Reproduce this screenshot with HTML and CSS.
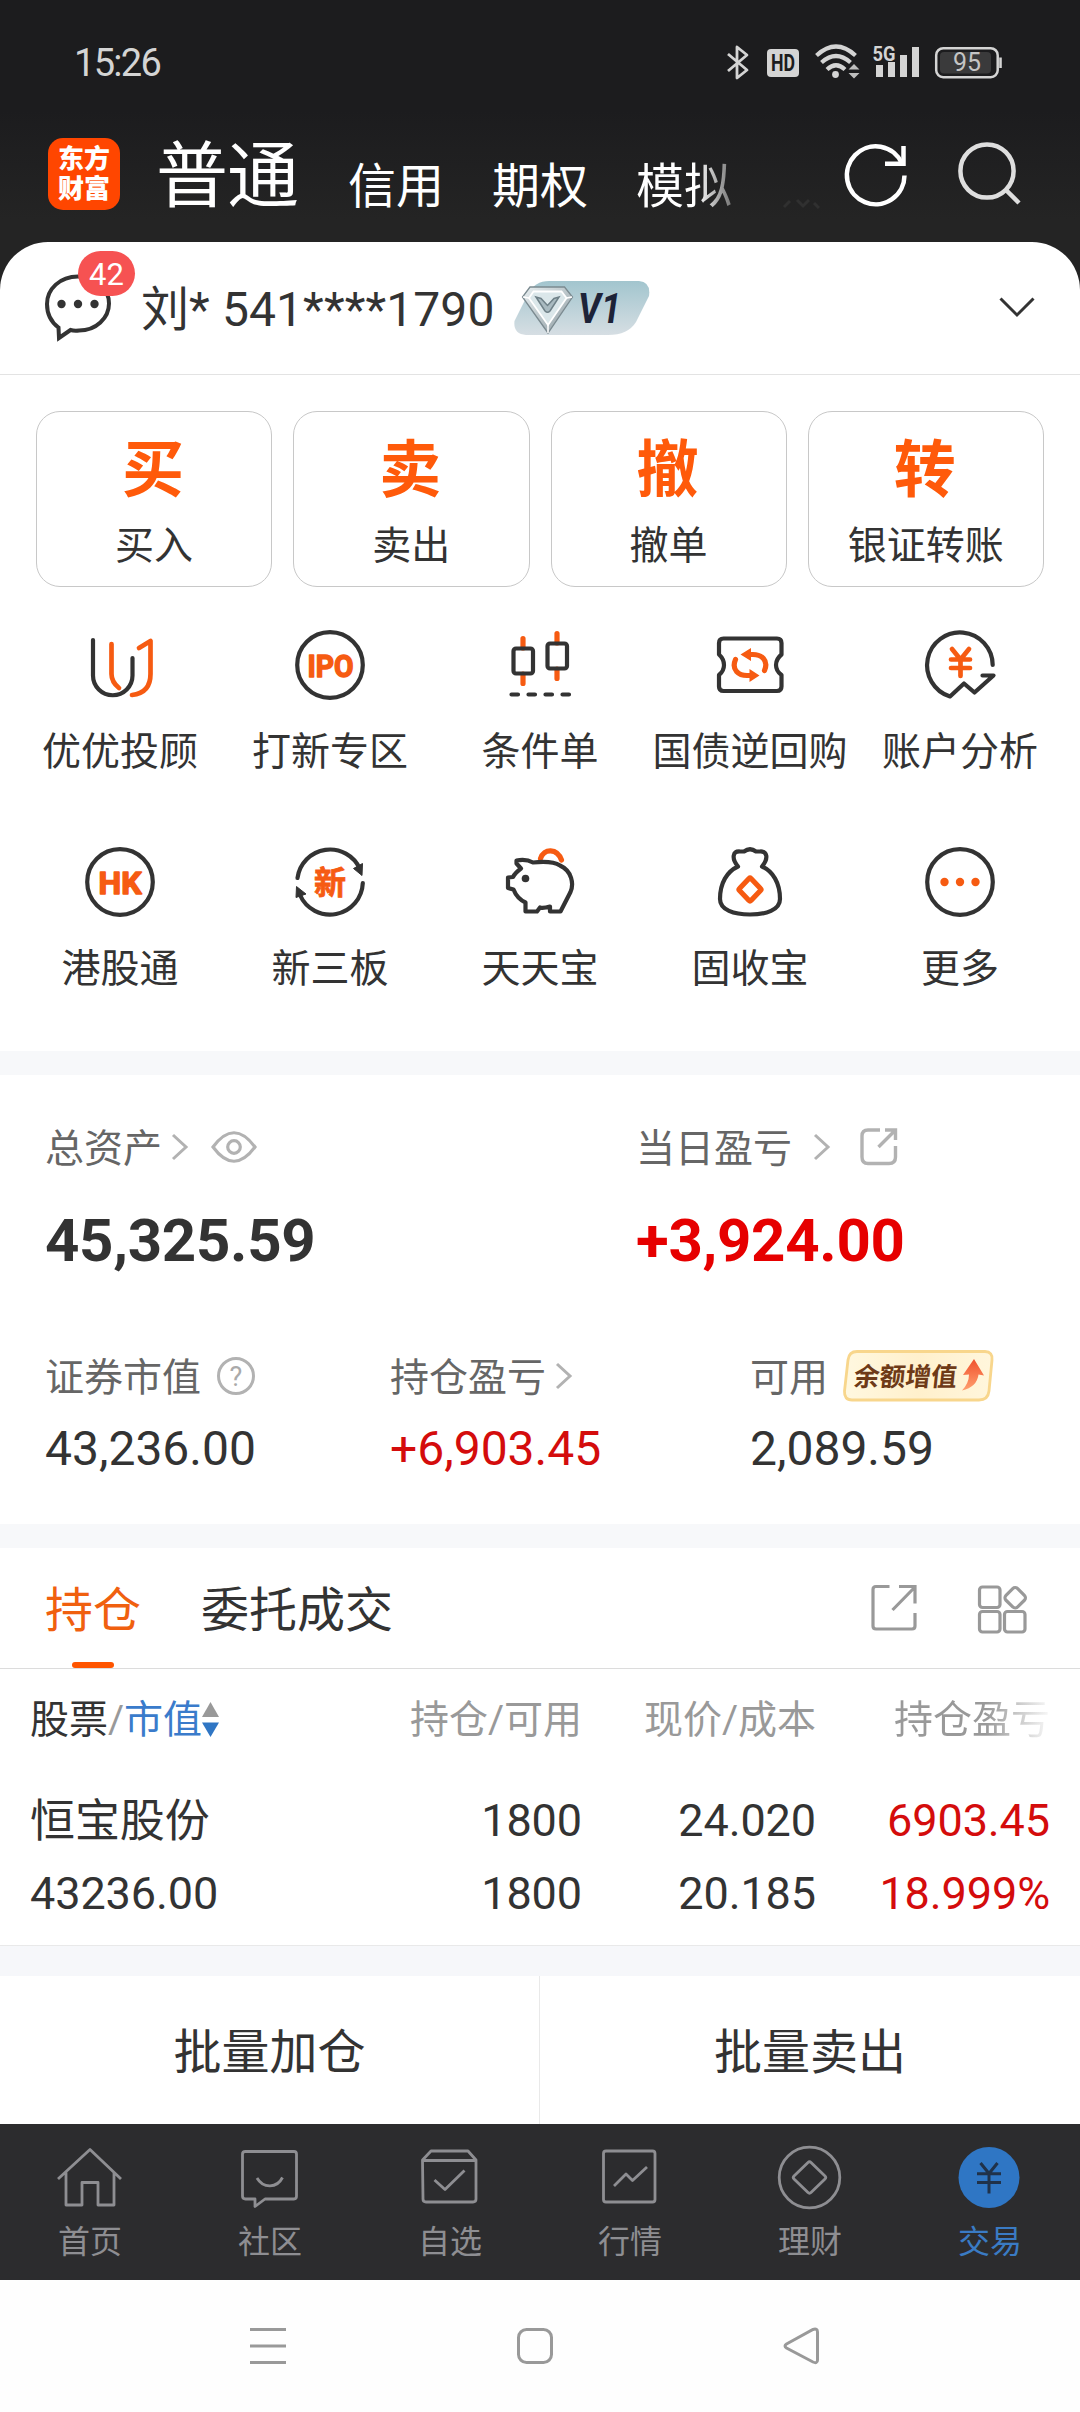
FILE: index.html
```html
<!DOCTYPE html>
<html lang="zh-CN">
<head>
<meta charset="utf-8">
<title>交易</title>
<link rel="stylesheet" href="styles.css">
</head>
<body>
<div class="screen">
  <header class="top">
    <div class="status">
      <span class="clock">15:26</span>
      <svg class="status-icons" width="280" height="40" viewBox="725 42 280 40" fill="none" stroke="#d4d4d4">
        <path d="M728 54L747 70L737 78V47L747 55L728 71" stroke-width="2.8" stroke-linejoin="round"/>
        <rect x="767" y="49" width="32" height="28" rx="4" fill="#d4d4d4" stroke="none"/>
        <text x="771" y="71" class="hd" textLength="24" lengthAdjust="spacingAndGlyphs">HD</text>
        <g stroke-width="4.2">
          <path d="M816.5 55.5Q836 37.500 855.500 55.500"/>
          <path d="M821.5 62.500Q836 49.500 850.500 62.500"/>
          <path d="M827 69.500Q836 61 845 69.500"/>
        </g>
        <circle cx="835.500" cy="74.500" r="3.400" fill="#d4d4d4" stroke="none"/>
        <path d="M848.500 69.500L854 64L859.500 69.500ZM848.500 73L854 78.500L859.500 73Z" fill="#bdbdbd" stroke="none"/>
        <path d="M876 65h7v12h-7zM888 62h7v15h-7zM900 55h7v22h-7zM912 47h7v30h-7z" fill="#d4d4d4" stroke="none"/>
        <text x="872.500" y="61" class="fiveg" textLength="23" lengthAdjust="spacingAndGlyphs">5G</text>
        <rect x="936.200" y="48.200" width="61.500" height="29" rx="7" stroke-width="2.500"/>
        <rect x="940" y="52" width="51" height="21.500" rx="4" fill="#3a3a3b" stroke="none"/>
        <path d="M1000.500 57.500V68" stroke-width="2.600"/>
        <text x="953" y="71" class="bat" textLength="28" lengthAdjust="spacingAndGlyphs">95</text>
      </svg>
    </div>
    <nav class="modes">
      <div class="logo"><span>东方</span><span>财富</span></div>
      <div class="mode-list">
        <span class="mode mode-on">普通</span>
        <span class="mode">信用</span>
        <span class="mode">期权</span>
        <span class="mode mode-fade">模拟</span>
        <svg class="more-mode" width="40" height="12" viewBox="780 198 40 12" fill="none" stroke="#303030" stroke-width="3"><path d="M784 207l6-6M797 200l6 6l6-6M814 203l5 5"/></svg>
      </div>
      <svg class="tool" width="72" height="72" viewBox="840 139 72 72" fill="none" stroke="#fff" stroke-width="4.500">
        <path d="M904.500 175.500A28.800 29 0 1 1 902 163.500"/>
        <path d="M885 163.700H903.500V146" stroke-linejoin="miter"/>
      </svg>
      <svg class="tool" width="72" height="72" viewBox="952 139 72 72" fill="none" stroke="#dedede" stroke-width="4.500">
        <circle cx="987" cy="171" r="26.600"/><path d="M1006 190L1019 203"/>
      </svg>
    </nav>
  </header>

  <main class="sheet">
    <section class="account">
      <div class="msg">
        <svg width="72" height="72" viewBox="43 272 72 72"><path d="M58.500 327.500C51 322 47 313 47 304C47 289 60 276.500 78 276.500C96 276.500 109 289 109 303.500C109 318 96 330.500 79 330.500Q74 331 70.500 330L59 338Z" fill="none" stroke="#333" stroke-width="4"/><g fill="#333"><circle cx="61.500" cy="304" r="4.200"/><circle cx="78" cy="304" r="4.200"/><circle cx="94.500" cy="304" r="4.200"/></g></svg>
        <span class="badge">42</span>
      </div>
      <span class="acct-name">刘* 541****1790</span>
      <svg class="vip" width="136" height="56" viewBox="514 280 136 56">
        <defs>
          <linearGradient id="vg" x1="0" y1="0" x2="0" y2="1"><stop offset="0" stop-color="#a2c5ce"/><stop offset="1" stop-color="#d6dee3"/></linearGradient>
          <linearGradient id="dg" x1="0" y1="0" x2="1" y2="1"><stop offset="0" stop-color="#e9f0f2"/><stop offset="1" stop-color="#8d9ba1"/></linearGradient>
        </defs>
        <path d="M549 281H639Q651 282 649 296L636 322Q628 335 608 335H526Q513 334 514.500 321L528 294Q535 281 549 281Z" fill="url(#vg)"/>
        <path d="M530 287H564.500L572.500 297L548 333L522.500 297Z" fill="url(#dg)" stroke="#7b8a90" stroke-width="1.300"/>
        <path d="M533.500 291.500H561.500L566.500 298L548 325L529 298Z" fill="#dbe7ea" stroke="#fff" stroke-width="1.800"/>
        <path d="M536 297L545 311Q547.500 313.500 550 311L559 297L554 298.500L547.500 305.500L541 298.500Z" fill="#a9bac0" stroke="#6f8188" stroke-width="1.500"/>
        <path d="M548 325V333M523 297L529 298M572 297L566.500 298" stroke="#fff" stroke-width="1.500"/>
        <text x="578" y="323" class="v1" textLength="43" lengthAdjust="spacingAndGlyphs">V1</text>
      </svg>
      <svg class="down" width="40" height="24" viewBox="997 295 40 24"><path d="M1000.500 298.500L1017 315L1033.500 298.500" fill="none" stroke="#333" stroke-width="3"/></svg>
    </section>

    <section class="actions">
      <div class="cards">
        <div class="card"><b>买</b><span>买入</span></div>
        <div class="card"><b>卖</b><span>卖出</span></div>
        <div class="card"><b>撤</b><span>撤单</span></div>
        <div class="card"><b>转</b><span>银证转账</span></div>
      </div>
      <div class="quick">
        <div class="q">
          <svg viewBox="78 623 84 84"><path class="dk" d="M93 640V675.500a19.500 19.500 0 0 0 39.500 0V658"/><path class="or" d="M111.500 644V674Q111.500 682 119 688M139 648L150.500 641V674Q150.500 693 132 695"/></svg>
          <span>优优投顾</span>
        </div>
        <div class="q">
          <svg viewBox="288 623 84 84"><circle class="dk" cx="330" cy="665" r="32.800"/><text class="ic" x="307.500" y="676.500" textLength="46" lengthAdjust="spacingAndGlyphs">IPO</text></svg>
          <span>打新专区</span>
        </div>
        <div class="q">
          <svg viewBox="498 623 84 84"><path class="or w5" d="M523 638.500V648M523 674V683.500M557 633.500V643M557 669V678.500"/><rect class="dk" x="513.500" y="648.500" width="19.500" height="25" rx="2.500"/><rect class="dk" x="547.500" y="643.500" width="19.500" height="25" rx="2.500"/><path class="dk" d="M511.500 694.500h6.500M528.500 694.500h6.500M545.500 694.500h6.500M562.500 694.500h6.500"/></svg>
          <span>条件单</span>
        </div>
        <div class="q">
          <svg viewBox="708 623 84 84"><path class="dk" d="M723.500 638.500H777Q781.500 638.500 781.500 643V654.500Q776 659 776 665Q776 671 781.500 675V686.500Q781.500 691 777 691H723.500Q719 691 719 686.500V675Q724 671 724 665Q724 659 719 654.500V643Q719 638.500 723.500 638.500Z"/><path class="or w5" d="M735.500 659.500C731 670 739 675.500 747 675.500H751M764.500 670.500C769 660 761 654.500 753 654.500H749"/><path d="M740.500 654.500L751 648V661ZM759.500 675.500L749.500 669V682Z" fill="#f65b12"/></svg>
          <span>国债逆回购</span>
        </div>
        <div class="q">
          <svg viewBox="918 623 84 84"><path class="dk" d="M992.700 665A32.800 32.800 0 1 0 950 696.500L964 683.500L974.500 692.500L993.500 675.500H982.500"/><path class="or" d="M952 649L960.500 659.500L969 649M951 659.500H970M951 668H970M960.500 660V676"/></svg>
          <span>账户分析</span>
        </div>
        <div class="q">
          <svg viewBox="78 840 84 84"><circle class="dk" cx="120" cy="882" r="32.800"/><text class="ic" x="98.500" y="893.500" textLength="43" lengthAdjust="spacingAndGlyphs">HK</text></svg>
          <span>港股通</span>
        </div>
        <div class="q">
          <svg viewBox="288 840 84 84"><path class="dk" d="M297.500 878A32.800 32.800 0 0 1 360 869M362.800 883A32.800 32.800 0 0 1 300 895"/><path d="M353.500 868.500L362.500 863.500L362 875.500ZM296.500 886.500L306 894L296 897.500Z" fill="#333" stroke="#333"/><text class="xin" x="314" y="893.500">新</text></svg>
          <span>新三板</span>
        </div>
        <div class="q">
          <svg viewBox="498 840 84 84"><path class="or w5" d="M540.500 858.500C544 848 557 848 561.500 860"/><path class="dk" d="M508 877.500L513 877Q515 873 521 868.500L516.500 863.500V860.500Q526 858.500 533 862.500C543 861.500 553 861 560 865.500C572 871 574 884 570.500 892L560.500 911.500H550V906.500Q543 908.500 540 907.500L537 911.500H525.500V902.500Q517 898.500 513.500 889.500L508 888Z"/><circle cx="525.500" cy="878.500" r="3.800" fill="#333"/></svg>
          <span>天天宝</span>
        </div>
        <div class="q">
          <svg viewBox="708 840 84 84"><path class="dk" d="M738 866.500C727 871.500 720 883 720 899C720 910 734 914.500 750 914.500C766 914.500 780 910 780 899C780 883 773 871.500 762 866.500C769 858 767 851 760 851.500H756Q750 847 744 851.500H740C733 851 731 858 738 866.500"/><path class="or w5" d="M749 878.500Q750 877.500 751 878.500L760.500 888.500Q761.500 889.500 760.500 890.500L751 900.500Q750 901.500 749 900.500L739.500 890.500Q738.500 889.500 739.500 888.500Z"/></svg>
          <span>固收宝</span>
        </div>
        <div class="q">
          <svg viewBox="918 840 84 84"><circle class="dk" cx="960" cy="882" r="32.800"/><g fill="#f65b12"><circle cx="944.500" cy="882" r="4.200"/><circle cx="960" cy="882" r="4.200"/><circle cx="975.500" cy="882" r="4.200"/></g></svg>
          <span>更多</span>
        </div>
      </div>
    </section>

    <section class="assets">
      <div class="main-row">
        <div class="stat">
          <div class="lab"><span>总资产</span>
            <svg class="arr" width="18" height="28" viewBox="0 0 18 28"><path d="M2 2L15 14L2 26"/></svg>
            <svg class="eye" width="48" height="36" viewBox="210 1129 48 36"><path d="M213 1147Q234 1118.500 255 1147Q234 1175.500 213 1147Z"/><circle cx="234" cy="1147" r="6.300"/></svg>
          </div>
          <div class="big">45,325.59</div>
        </div>
        <div class="stat">
          <div class="lab"><span>当日盈亏</span>
            <svg class="arr far" width="18" height="28" viewBox="0 0 18 28"><path d="M2 2L15 14L2 26"/></svg>
            <svg class="share" width="40" height="40" viewBox="859 1127 40 40"><path d="M880 1130H868Q862 1130 862 1136V1157Q862 1163.500 868 1163.500H889Q895.500 1163.500 895.500 1157V1146M885 1130H895.500V1140M895 1130.500L878.500 1147"/></svg>
          </div>
          <div class="big red">+3,924.00</div>
        </div>
      </div>
      <div class="sub-row">
        <div class="stat">
          <div class="lab"><span>证券市值</span>
            <svg class="help" width="40" height="40" viewBox="0 0 40 40"><circle cx="20" cy="20" r="17.500"/><text x="20" y="30" text-anchor="middle">?</text></svg>
          </div>
          <div class="mid">43,236.00</div>
        </div>
        <div class="stat">
          <div class="lab"><span>持仓盈亏</span>
            <svg class="arr near" width="18" height="28" viewBox="0 0 18 28"><path d="M2 2L15 14L2 26"/></svg>
          </div>
          <div class="mid red2">+6,903.45</div>
        </div>
        <div class="stat">
          <div class="lab"><span>可用</span>
            <svg class="promo" width="152" height="54" viewBox="842 1349 152 54">
              <defs>
                <linearGradient id="pg" x1="0" y1="0" x2="1" y2="0"><stop offset="0" stop-color="#fff8e0"/><stop offset=".5" stop-color="#fff0cc"/><stop offset="1" stop-color="#fff6dc"/></linearGradient>
                <linearGradient id="ag" x1="0" y1="0" x2="0" y2="1"><stop offset="0" stop-color="#f0512c"/><stop offset="1" stop-color="#ffa070"/></linearGradient>
              </defs>
              <path d="M857 1351.500H985Q993 1352 992 1360L989 1391Q988 1400 979 1400H852Q844 1400 844.500 1391L848 1360Q849 1351.500 857 1351.500Z" fill="url(#pg)" stroke="#f8d68c" stroke-width="2.800"/>
              <text class="promo-t" transform="translate(853 1386) skewX(-6)" textLength="103" lengthAdjust="spacingAndGlyphs">余额增值</text>
              <path d="M974 1359L984 1375.500L978.500 1374.500Q977 1387 962 1390.500Q969 1383 969 1374.500L963 1375Z" fill="url(#ag)"/>
            </svg>
          </div>
          <div class="mid">2,089.59</div>
        </div>
      </div>
    </section>

    <section class="holdings">
      <div class="tabs">
        <span class="tab tab-on">持仓</span>
        <span class="tab">委托成交</span>
        <svg class="t-icon" width="52" height="52" viewBox="868 1582 52 52"><path d="M889.500 1586.500H876Q873 1586.500 873 1589.500V1626Q873 1629 876 1629H912Q915 1629 915 1626V1613M899 1586.500H915V1603.500M914 1588L892.500 1610"/></svg>
        <svg class="t-icon" width="52" height="52" viewBox="976 1582 52 52"><rect x="979.500" y="1587" width="20.500" height="20.500" rx="3"/><rect x="979.500" y="1611.500" width="20.500" height="20.500" rx="3"/><rect x="1004.500" y="1611.500" width="20.500" height="20.500" rx="3"/><rect x="1007" y="1589.500" width="16.500" height="16.500" rx="3.500" transform="rotate(45 1015.200 1597.700)"/></svg>
      </div>
      <div class="table">
        <div class="tr th">
          <span class="first"><i class="dark">股票</i>/<i class="blue">市值</i><svg width="17" height="36" viewBox="0 0 17 36"><path d="M8.500 0L17 15H0Z" fill="#999"/><path d="M8.500 35L17 20.500H0Z" fill="#2f76c4"/></svg></span>
          <span>持仓/可用</span><span>现价/成本</span><span class="fade">持仓盈亏</span>
        </div>
        <div class="tr"><span class="first name">恒宝股份</span><span>1800</span><span>24.020</span><span class="red2">6903.45</span></div>
        <div class="tr"><span class="first">43236.00</span><span>1800</span><span>20.185</span><span class="red2">18.999%</span></div>
      </div>
    </section>

    <div class="batch"><span>批量加仓</span><span>批量卖出</span></div>
  </main>

  <nav class="tabbar">
    <div class="ti"><svg viewBox="54 2141 72 72"><path d="M58 2179L90 2149.500L121 2179M66 2172.500V2205H82V2182.500H98V2205H114V2172.500"/></svg><span>首页</span></div>
    <div class="ti"><svg viewBox="234 2141 72 72"><path d="M245.500 2151.500H294Q296.500 2151.500 296.500 2154V2196Q296.500 2199 294 2199H265L255 2206.500V2199H245.500Q242.500 2199 242.500 2196V2154Q242.500 2151.500 245.500 2151.500ZM257 2178C263 2188.500 277 2188.500 282.500 2177.500"/></svg><span>社区</span></div>
    <div class="ti"><svg viewBox="414 2141 72 72"><path d="M422.500 2160L431 2151H468L476 2160V2199Q476 2202 473 2202H426Q423 2202 423 2199ZM423 2160.500H476M434.500 2180L445 2189.500L464.500 2170.500"/></svg><span>自选</span></div>
    <div class="ti"><svg viewBox="594 2141 72 72"><rect x="603.500" y="2151" width="51.500" height="51" rx="2.500"/><path d="M614 2186L626 2174L632.500 2180.500L647 2167"/></svg><span>行情</span></div>
    <div class="ti"><svg viewBox="774 2141 72 72"><circle cx="809.500" cy="2177.500" r="30.300"/><path d="M808 2162.500Q809.500 2161 811 2162.500L825 2176Q826.500 2177.500 825 2179L811 2192.500Q809.500 2194 808 2192.500L794 2179Q792.500 2177.500 794 2176Z"/></svg><span>理财</span></div>
    <div class="ti on"><svg viewBox="954 2141 72 72"><circle class="disc" cx="989" cy="2177.500" r="30.500"/><path class="yen" d="M980.500 2163L989 2173.500L997.500 2163M977 2173.700H1001M977 2182.500H1001M989 2173V2193.500"/></svg><span>交易</span></div>
  </nav>
  <div class="sysnav">
    <svg viewBox="244 2322 48 48"><path d="M250 2329.500H286M250 2346H286M250 2362.500H286"/></svg>
    <svg viewBox="512 2322 48 48"><rect x="519.500" y="2329.500" width="33" height="33" rx="8"/></svg>
    <svg viewBox="778 2322 48 48"><path d="M786.500 2344L813 2329.500Q817.500 2328 817.500 2332V2360Q817.500 2364 813 2362L786.500 2348Q783.500 2346 786.500 2344Z"/></svg>
  </div>
</div>
</body>
</html>
```
FILE: styles.css
```css
* { box-sizing: border-box; }
body { margin: 0; background: #fff; }
svg { display: block; flex: none; }
i { font-style: normal; }

.screen {
  width: 1080px;
  height: 2412px;
  overflow: hidden;
  display: flex;
  flex-direction: column;
  font-family: Roboto, "Noto Sans CJK SC", sans-serif;
  color: #333;
  background: linear-gradient(#1c1c1e 0, #1c1c1e 110px, #242424 220px, #242424 300px, #fff 300px);
}

/* status bar and account modes */
.top { height: 242px; flex: none; }
.status { height: 124px; padding: 42px 75px 0 74px; display: flex; justify-content: space-between; }
.clock { font-size: 38px; line-height: 42px; letter-spacing: -1.7px; color: #d4d4d4; }
.hd { font: 700 24px Roboto, sans-serif; fill: #1c1c1e; stroke: none; }
.fiveg { font: 700 21px Roboto, sans-serif; fill: #d4d4d4; stroke: none; }
.bat { font: 400 25px Roboto, sans-serif; fill: #c4c4c4; stroke: none; }
.modes { display: flex; padding: 0 56px 0 48px; height: 100px; }
.logo {
  width: 72px; height: 72px; margin-top: 14px; border-radius: 15px; background: #ff4600;
  display: flex; flex-direction: column; align-items: center; justify-content: center;
  color: #fff; font-size: 26px; font-weight: 900; line-height: 30px;
}
.mode-list { width: 720px; padding: 7px 0 0 36px; display: flex; align-items: flex-start; gap: 48px; }
.mode { font-size: 48px; line-height: 64px; margin-top: 24px; color: #fff; white-space: nowrap; }
.mode-on { font-size: 72px; line-height: 92px; margin: 0; letter-spacing: -1px; padding-right: 2px; }
.mode-fade { background: linear-gradient(90deg, #fff 60px, #555 104px); background-clip: text; color: transparent; }
.more-mode { margin-top: 67px; }
.tool { margin-top: 15px; }
.tool + .tool { margin-left: 40px; }

/* account line */
.sheet { flex: none; height: 1882px; border-radius: 48px 48px 0 0; background: #fff; }
.account { height: 133px; display: flex; align-items: flex-start; padding: 0 43px; border-bottom: 1px solid #e3e3e3; }
.msg { position: relative; margin-top: 30px; }
.badge {
  position: absolute; left: 35px; top: -21px; width: 57px; height: 45px; border-radius: 23px;
  background: #f65252; color: #fff; font-size: 31px; line-height: 47px; text-align: center;
}
.acct-name { margin: 38px 0 0 26px; font-size: 48px; line-height: 60px; letter-spacing: .1px; white-space: nowrap; }
.vip { margin: 38px 0 0 19px; }
.v1 { font: italic 700 42px Roboto, sans-serif; fill: #1d2338; }
.down { margin: 53px 0 0 auto; }

/* trade cards and shortcuts */
.actions { height: 676px; padding: 36px 0 0; }
.cards { display: grid; grid-template-columns: repeat(4, 1fr); gap: 21px; padding: 0 36px; }
.card {
  height: 176px; border: 1px solid #c8c8c8; border-radius: 24px;
  display: flex; flex-direction: column; align-items: center;
}
.card b { margin: 24px 2px 0 0; font-size: 62px; line-height: 70px; color: #ff5a0a; }
.card span { margin-top: 15px; font-size: 39px; line-height: 50px; }
.quick { display: grid; grid-template-columns: repeat(5, 210px); row-gap: 63px; padding: 36px 15px 0; }
.q { display: flex; flex-direction: column; align-items: center; }
.q svg { width: 84px; height: 84px; }
.q span { margin-top: 20px; font-size: 39px; line-height: 50px; white-space: nowrap; }
.dk { fill: none; stroke: #333; stroke-width: 4.2; stroke-linecap: round; stroke-linejoin: round; }
.or { fill: none; stroke: #f65b12; stroke-width: 4.7; stroke-linecap: round; stroke-linejoin: round; }
.w5 { stroke-width: 5.2; }
.ic { font: 700 32px Roboto, sans-serif; fill: #f65b12; stroke: #f65b12; stroke-width: 1.5; stroke-linejoin: round; }
.xin { font: 700 32px "Noto Sans CJK SC", sans-serif; fill: #f65b12; stroke: #f65b12; stroke-width: .8; }

/* asset summary */
.assets { height: 473px; border-top: 24px solid #f7f8fa; padding: 42px 0 0 45px; }
.main-row { display: grid; grid-template-columns: 591px 1fr; height: 229px; }
.sub-row { display: grid; grid-template-columns: 345px 360px 1fr; }
.lab { height: 60px; display: flex; align-items: center; font-size: 39px; color: #666; white-space: nowrap; }
.lab span { margin-bottom: 4px; }
.big { margin-top: 29px; font-size: 60px; line-height: 70px; font-weight: 700; letter-spacing: -.3px; }
.mid { margin-top: 13px; font-size: 48px; line-height: 60px; }
.red { color: #e60000; }
.red2 { color: #d40c0c; }
.arr { margin-left: 9px; fill: none; stroke: #b2b2b2; stroke-width: 3; }
.arr.far { margin-left: 21px; }
.eye { margin-left: 21px; fill: none; stroke: #b2b2b2; stroke-width: 3.2; }
.share { margin-left: 28px; fill: none; stroke: #b2b2b2; stroke-width: 3.4; }
.help { margin-left: 15px; }
.help circle { fill: none; stroke: #b2b2b2; stroke-width: 3; }
.help text { font: 400 27px Roboto, sans-serif; fill: #aaa; }
.promo { margin-left: 14px; }
.promo-t { font: 700 26px "Noto Sans CJK SC", sans-serif; fill: #6e3a17; }

/* holdings */
.holdings { height: 422px; border-top: 24px solid #f7f8fa; }
.tabs { height: 121px; display: flex; padding: 0 52px 0 45px; border-bottom: 1px solid #dcdcdc; }
.tab { position: relative; height: 120px; font-size: 48px; line-height: 125px; margin-right: 60px; }
.tab-on { color: #f0600f; }
.tab-on::after {
  content: ""; position: absolute; left: 27px; bottom: 0; width: 42px; height: 6px;
  border-radius: 3px; background: #ff5500;
}
.t-icon { margin-top: 34px; fill: none; stroke: #999; stroke-width: 3.2; }
.tab + .t-icon { margin-left: auto; }
.t-icon + .t-icon { margin-left: 56px; }
.table { padding-top: 21px; height: 277px; border-bottom: 1px solid #e9e9e9; }
.tr {
  display: grid; grid-template-columns: 300px 252px 234px 234px; padding-left: 30px;
  font-size: 45px; line-height: 73px; text-align: right; letter-spacing: -.1px;
}
.tr .first { text-align: left; }
.tr .name { height: 73px; line-height: 75px; }
.th { font-size: 39px; line-height: 60px; color: #999; margin-bottom: 34px; letter-spacing: 0; }
.th .first { display: flex; align-items: center; }
.dark { color: #333; }
.blue { color: #3a7bcb; }
.fade { background: linear-gradient(90deg, #999 170px, #fff 238px); background-clip: text; color: transparent; }

.batch { height: 178px; border-top: 30px solid #f6f7fa; display: grid; grid-template-columns: 1fr 1fr; }
.batch span { height: 148px; text-align: center; font-size: 48px; line-height: 154px; }
.batch span:first-child { border-right: 1px solid #e9e9e9; }

/* bottom navigation */
.tabbar { flex: none; height: 156px; background: #2c2c2e; display: grid; grid-template-columns: repeat(6, 1fr); padding-top: 17px; }
.ti { display: flex; flex-direction: column; align-items: center; color: #8e8e92; font-size: 32px; line-height: 40px; }
.ti svg { width: 72px; height: 72px; fill: none; stroke: #8e8e92; stroke-width: 2.8; stroke-linejoin: round; }
.ti span { margin-top: 9px; }
.ti.on { color: #3a7bc4; }
.ti .disc { fill: #2f76c4; stroke: none; }
.ti .yen { stroke: #20324a; stroke-width: 3; stroke-linejoin: miter; }
.sysnav { flex: none; height: 132px; background: #fefefe; display: flex; padding: 42px 0 0 244px; gap: 219px; }
.sysnav svg { width: 48px; height: 48px; fill: none; stroke: #999; stroke-width: 3; }
```
